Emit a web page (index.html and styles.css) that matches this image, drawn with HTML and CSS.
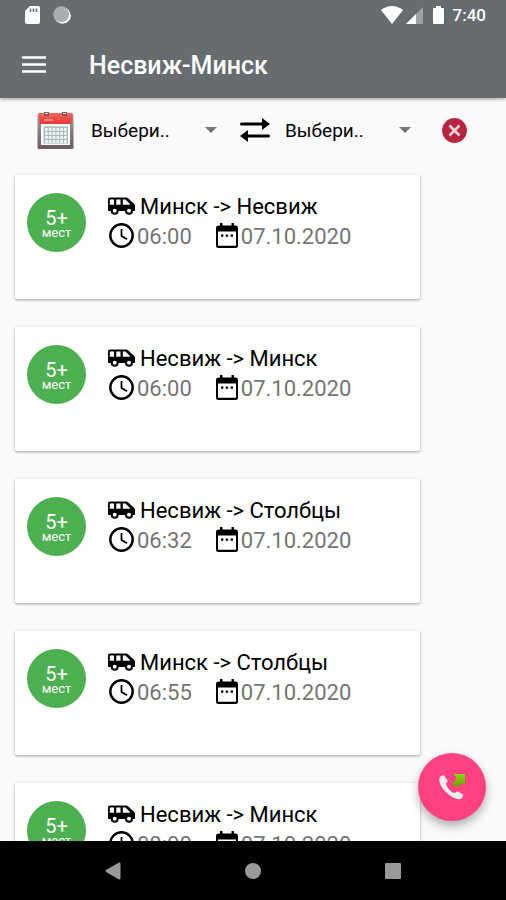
FILE: index.html
```html
<!DOCTYPE html>
<html lang="ru">
<head>
<meta charset="utf-8">
<meta name="viewport" content="width=device-width, initial-scale=1">
<title>Несвиж-Минск</title>
<link rel="stylesheet" href="styles.css">
</head>
<body>
<svg class="sprite" aria-hidden="true">
  <symbol id="bus" viewBox="0 0 27 18">
    <path fill-rule="evenodd" d="M2 .5H18Q19 .5 20 1.300L25.800 6.500Q27 7.700 27 9V14H0V2.500Q0 .5 2 .5ZM1.800 2.400V7.800H6V2.400ZM8.300 2.400V7.800H12.500V2.400ZM14.800 2.400V7.800H22.500L17.500 2.400Z"/>
    <circle cx="6.700" cy="13.800" r="3" fill="#fff" stroke="currentColor" stroke-width="2"/>
    <circle cx="21" cy="13.800" r="3" fill="#fff" stroke="currentColor" stroke-width="2"/>
  </symbol>
  <symbol id="clock" viewBox="0 0 25 25">
    <circle cx="12.500" cy="12.500" r="11.200" fill="none" stroke="currentColor" stroke-width="2.400"/>
    <path d="M12.500 6V13L18 16.300" fill="none" stroke="currentColor" stroke-width="1.800"/>
  </symbol>
  <symbol id="date" viewBox="0 0 22 25">
    <path fill-rule="evenodd" d="M4 0H6.500V2.500H15.500V0H18V2.500H19.500Q22 2.500 22 5V22.500Q22 25 19.500 25H2.500Q0 25 0 22.500V5Q0 2.500 2.500 2.500H4ZM2 8.500V22.800H20V8.500Z"/>
    <path d="M5 11.500h2.300v2.300H5zM9.800 11.500h2.300v2.300H9.800zM14.600 11.500H17v2.300h-2.400z"/>
  </symbol>
</svg>

<header class="top">
  <div class="status">
    <svg class="status-sd" viewBox="0 0 15 18"><path fill="#fff" d="M5 0H13Q15 0 15 2V16Q15 18 13 18H2Q0 18 0 16V5Z"/><path d="M5.500 2.500V6M8.500 2.500V6M11.500 2.500V6" stroke="#666c6f" stroke-width="1.500"/></svg>
    <svg class="status-sync" viewBox="0 0 18 18"><circle cx="9.500" cy="9.500" r="8.300" fill="#fff"/><circle cx="8.300" cy="8.300" r="8" fill="#a9adae"/><circle cx="8.500" cy="8.500" r="6.500" fill="none" stroke="#c3c6c7" stroke-dasharray="1 1.500"/></svg>
    <span class="spacer"></span>
    <svg class="status-wifi" viewBox="0 0 22 18"><path fill="#fff" d="M0 4Q11-4 22 4L11 18Z"/></svg>
    <svg class="status-cell" viewBox="0 0 17 17"><path fill="#9ea2a4" d="M17 0V17H0Z"/><path fill="#fff" d="M10 7V17H0Z"/></svg>
    <svg class="status-battery" viewBox="0 0 11 18"><path fill="#fff" d="M3 0H8V2H10Q11 2 11 3V17Q11 18 10 18H1Q0 18 0 17V3Q0 2 1 2H3Z"/></svg>
    <time class="status-time">7:40</time>
  </div>
  <div class="toolbar">
    <button class="menu" type="button" aria-label="Меню"><svg viewBox="0 0 24 17"><path d="M0 1.500H24M0 8.500H24M0 15.500H24" stroke="#fff" stroke-width="2.400"/></svg></button>
    <h1 class="title">Несвиж-Минск</h1>
  </div>
</header>

<main class="content">
  <form class="filters">
    <button class="pick-date" type="button" aria-label="Дата">
      <svg viewBox="0 0 37 37">
        <defs>
          <linearGradient id="red" x2="0" y2="1"><stop stop-color="#f56761"/><stop offset="1" stop-color="#e53935"/></linearGradient>
          <linearGradient id="frame" x2="0" y2="1"><stop stop-color="#a39a9c"/><stop offset="1" stop-color="#6e5a60"/></linearGradient>
        </defs>
        <rect x=".5" y="3" width="36" height="34" rx="1.500" fill="url(#frame)"/>
        <path fill="#fafafa" d="M4 12H33V33H4Z"/>
        <path fill="url(#red)" d="M2 1H35Q36 1 36 3L34 12H3L1 3Q1 1 2 1Z"/>
        <path d="M7 8H16" stroke="#ffb4ae" stroke-width="1.200"/>
        <path d="M7 0H12V4H7ZM25 0H30V4H25Z" fill="#885659"/>
        <path d="M8 1.500H11M26 1.500H29" stroke="#ddd"/>
        <path fill="#a9bcbc" d="M6.500 14.500H31V31.500H6.500Z"/>
        <path d="M8 17.500H30M8 21.500H30M8 25.500H30M8 29.500H30" stroke="#e9f3f2" stroke-width="2.800" stroke-dasharray="2.800 1"/>
      </svg>
    </button>
    <label class="picker"><select aria-label="Откуда"><option>Выбери..</option></select><svg viewBox="0 0 12 6"><path fill="#757575" d="M0 0H12L6 6Z"/></svg></label>
    <button class="swap" type="button" aria-label="Поменять местами"><svg viewBox="0 0 30 24"><path d="M1.500 6H23M7 18H28.500" stroke="#000" stroke-width="3" stroke-linecap="round"/><path d="M22 0L30 6L22 12ZM8 12L0 18L8 24Z"/></svg></button>
    <label class="picker"><select aria-label="Куда"><option>Выбери..</option></select><svg viewBox="0 0 12 6"><path fill="#757575" d="M0 0H12L6 6Z"/></svg></label>
    <button class="reset" type="button" aria-label="Сбросить"><svg viewBox="0 0 25 25"><circle cx="12.500" cy="12.500" r="12.400" fill="#b8233f"/><path d="M7.500 7.500L17.500 17.500M17.500 7.500L7.500 17.500" stroke="#ead3d8" stroke-width="2.600"/></svg></button>
  </form>

  <ul class="trips">
    <li class="trip">
      <div class="seats"><b>5+</b><span>мест</span></div>
      <div class="info">
        <div class="route"><svg><use href="#bus"/></svg>Минск -&gt; Несвиж</div>
        <div class="when"><svg class="clock"><use href="#clock"/></svg><time>06:00</time><svg class="date"><use href="#date"/></svg><time>07.10.2020</time></div>
      </div>
    </li>
    <li class="trip">
      <div class="seats"><b>5+</b><span>мест</span></div>
      <div class="info">
        <div class="route"><svg><use href="#bus"/></svg>Несвиж -&gt; Минск</div>
        <div class="when"><svg class="clock"><use href="#clock"/></svg><time>06:00</time><svg class="date"><use href="#date"/></svg><time>07.10.2020</time></div>
      </div>
    </li>
    <li class="trip">
      <div class="seats"><b>5+</b><span>мест</span></div>
      <div class="info">
        <div class="route"><svg><use href="#bus"/></svg>Несвиж -&gt; Столбцы</div>
        <div class="when"><svg class="clock"><use href="#clock"/></svg><time>06:32</time><svg class="date"><use href="#date"/></svg><time>07.10.2020</time></div>
      </div>
    </li>
    <li class="trip">
      <div class="seats"><b>5+</b><span>мест</span></div>
      <div class="info">
        <div class="route"><svg><use href="#bus"/></svg>Минск -&gt; Столбцы</div>
        <div class="when"><svg class="clock"><use href="#clock"/></svg><time>06:55</time><svg class="date"><use href="#date"/></svg><time>07.10.2020</time></div>
      </div>
    </li>
    <li class="trip">
      <div class="seats"><b>5+</b><span>мест</span></div>
      <div class="info">
        <div class="route"><svg><use href="#bus"/></svg>Несвиж -&gt; Минск</div>
        <div class="when"><svg class="clock"><use href="#clock"/></svg><time>08:00</time><svg class="date"><use href="#date"/></svg><time>07.10.2020</time></div>
      </div>
    </li>
  </ul>

  <button class="call" type="button" aria-label="Позвонить">
    <svg viewBox="0 0 26 26">
      <defs>
        <linearGradient id="green" x2="0" y2="1"><stop stop-color="#94d500"/><stop offset="1" stop-color="#5da000"/></linearGradient>
      </defs>
      <path fill="#eee" d="M1 3Q3 .5 5 1.500L8.500 6.500Q9 8 7 9.500Q7 12 10 15.500Q13.500 19 16 19Q17.500 17 19 17.500L24 20.500Q25 22 22.500 24.500Q19 27 11 21.500Q2 15 .5 8Q0 5 1 3Z"/>
      <path fill="url(#green)" d="M14.500 0H26V11.500L22.500 9Q20.500 12.500 16.500 13.500L13 9.500Q16.500 8 17.500 4Z"/>
    </svg>
  </button>
</main>

<nav class="system-nav">
  <button type="button" aria-label="Назад"><svg viewBox="0 0 16 18"><path fill="#999" d="M14 .5Q15.500 0 15.500 2V16Q15.500 18 14 17.500L1 10Q0 9 1 8Z"/></svg></button>
  <button type="button" aria-label="Домой"><svg viewBox="0 0 16 16"><circle cx="8" cy="8" r="8" fill="#999"/></svg></button>
  <button type="button" aria-label="Обзор"><svg viewBox="0 0 16 16"><rect width="16" height="16" rx="1" fill="#999"/></svg></button>
</nav>
</body>
</html>
```
FILE: styles.css
```css
* {
  box-sizing: border-box;
}

body {
  margin: 0;
  height: 100vh;
  display: flex;
  flex-direction: column;
  overflow: hidden;
  background: #fafafa;
  color: #000;
  font-family: Roboto, "Noto Sans", sans-serif;
}

button {
  display: grid;
  place-items: center;
  padding: 0;
  border: 0;
  background: none;
}

svg {
  display: block;
  flex: none;
}

.sprite {
  position: absolute;
  width: 0;
  height: 0;
}

.top {
  position: relative;
  flex: none;
  background: #666c6f;
  color: #fff;
  box-shadow: 0 1px 4px rgba(0, 0, 0, 0.4);
}

.status {
  display: flex;
  align-items: center;
  height: 30px;
  padding: 0 20px 0 25px;
}

.status-sd { width: 15px; height: 18px; }
.status-sync { width: 18px; height: 18px; margin-left: 13px; }
.spacer { flex: 1; }
.status-wifi { width: 22px; height: 18px; }
.status-cell { width: 17px; height: 17px; margin-left: 3px; }
.status-battery { width: 11px; height: 18px; margin-left: 10px; }

.status-time {
  margin-left: 9px;
  font-size: 17px;
  font-weight: 500;
}

.toolbar {
  display: flex;
  align-items: center;
  gap: 43px;
  height: 68px;
  padding: 0 22px;
}

.menu svg {
  width: 24px;
  height: 17px;
}

.title {
  margin: 0;
  padding-top: 2px;
  font-size: 25px;
  font-weight: 500;
}

.content {
  flex: 1;
  min-height: 0;
  position: relative;
  overflow: hidden;
}

.filters {
  display: flex;
  align-items: center;
  height: 64px;
  padding: 0 39px 0 37px;
}

.pick-date svg { width: 37px; height: 37px; }

.picker {
  flex: 1;
  display: flex;
  align-items: center;
  margin-left: 17px;
}

.picker select {
  flex: 1;
  min-width: 0;
  appearance: none;
  padding: 2px 0 0;
  border: 0;
  background: none;
  color: #000;
  font: 19px/28px Roboto, "Noto Sans", sans-serif;
}

.picker svg { width: 12px; height: 6px; }

.swap { margin-left: 23px; }
.swap svg { width: 30px; height: 24px; }
.swap + .picker { margin-left: 15px; }

.reset { margin-left: 31px; }
.reset svg { width: 25px; height: 25px; }

.trips {
  display: grid;
  gap: 28px;
  margin: 13px 86px 0 15px;
  padding: 0;
  list-style: none;
}

.trip {
  display: flex;
  gap: 22px;
  min-height: 124px;
  padding: 18px 12px;
  border-radius: 2px;
  background: #fff;
  box-shadow: 0 1px 3px rgba(0, 0, 0, 0.36);
}

.seats {
  flex: none;
  width: 59px;
  height: 59px;
  padding-top: 16px;
  border-radius: 50%;
  background: #4caf50;
  color: #fff;
  text-align: center;
}

.seats b,
.seats span {
  display: block;
}

.seats b {
  font-size: 20px;
  font-weight: 400;
  line-height: 18px;
}

.seats span {
  font-size: 13px;
  line-height: 12px;
}

.route,
.when {
  display: flex;
  align-items: center;
  font-size: 22px;
  line-height: 30px;
}

.route {
  gap: 5px;
  height: 28px;
}

.route svg { width: 27px; height: 18px; margin-bottom: 3px; }

.when {
  gap: 3px;
  height: 32px;
  padding-left: 1px;
  color: #757575;
}

.when svg { margin-bottom: 3px; color: #000; }
.when .clock { width: 25px; height: 25px; }
.when .date { width: 22px; height: 25px; margin-left: 21px; }
.route svg,
.when svg { fill: currentColor; }

.call {
  position: absolute;
  right: 20px;
  bottom: 20px;
  width: 68px;
  height: 68px;
  border-radius: 50%;
  background: #ff4081;
  box-shadow: 0 5px 10px rgba(0, 0, 0, 0.3);
}

.call svg { width: 26px; height: 26px; }

.system-nav {
  position: relative;
  flex: none;
  display: flex;
  justify-content: center;
  gap: 124px;
  height: 59px;
  background: #000;
}

.system-nav svg { width: 16px; height: 18px; }
```
